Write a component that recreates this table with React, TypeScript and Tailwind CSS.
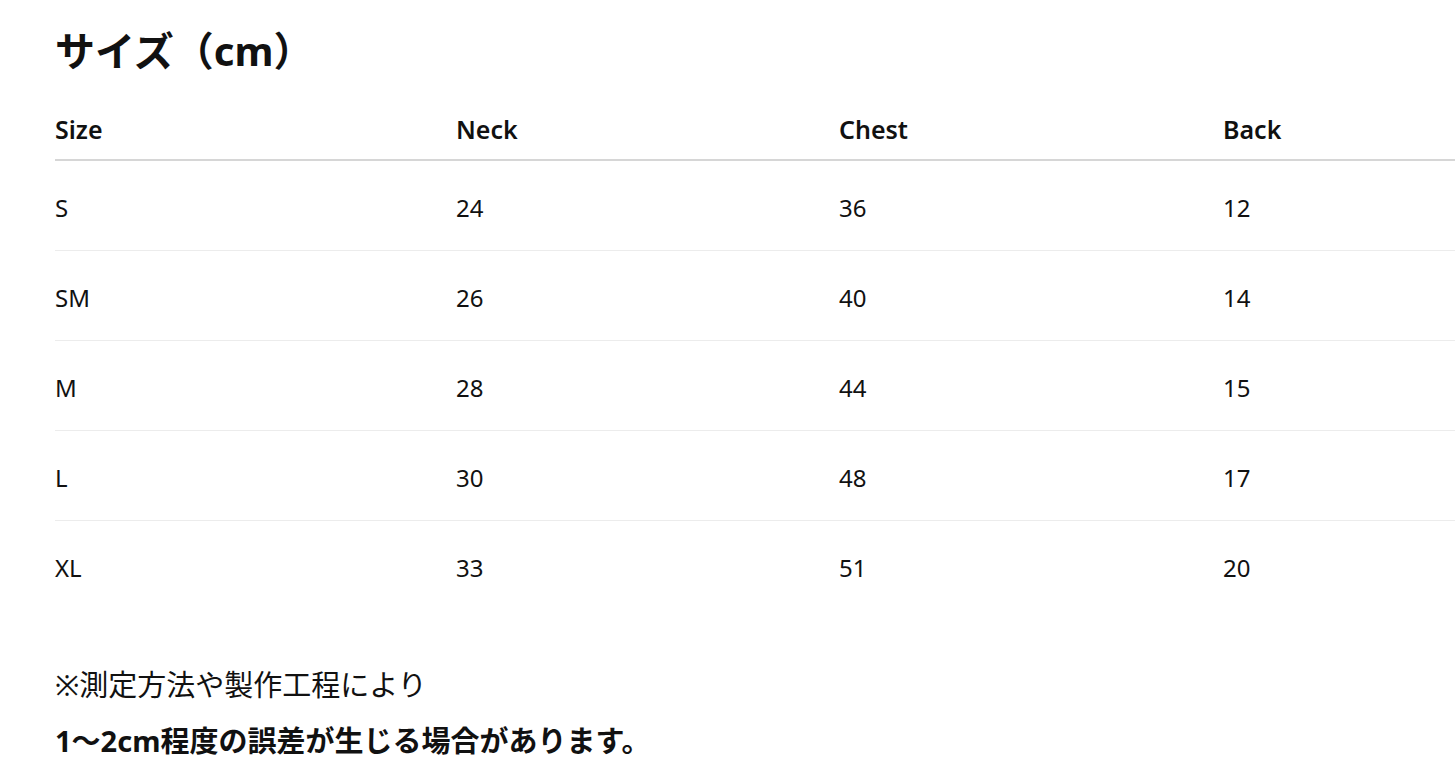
const rows = [
  { size: "S", neck: 24, chest: 36, back: 12 },
  { size: "SM", neck: 26, chest: 40, back: 14 },
  { size: "M", neck: 28, chest: 44, back: 15 },
  { size: "L", neck: 30, chest: 48, back: 17 },
  { size: "XL", neck: 33, chest: 51, back: 20 },
];

const cols = "grid grid-cols-[401px_383px_384px_1fr]";

export default function App() {
  return (
    <div
      className="min-h-screen bg-white pl-[55px] pt-[21px] text-[#111]"
      style={{ fontFamily: '"Noto Sans", "Noto Sans CJK JP", sans-serif' }}
    >
      <h1 className="text-[40px] font-bold leading-[60px]">サイズ（cm）</h1>

      <div className="mt-[20px]">
        <div className={`${cols} h-[60px] items-center border-b-2 border-[#d6d6d6] text-[25px] font-semibold`}>
          <div>Size</div>
          <div>Neck</div>
          <div>Chest</div>
          <div>Back</div>
        </div>
        {rows.map((r, i) => (
          <div
            key={r.size}
            className={`${cols} h-[90px] items-center pt-[4px] text-[24px] ${
              i < rows.length - 1 ? "border-b border-[#ececec]" : ""
            }`}
          >
            <div>{r.size}</div>
            <div>{r.neck}</div>
            <div>{r.chest}</div>
            <div>{r.back}</div>
          </div>
        ))}
      </div>

      <div className="mt-[46px] text-[29px] leading-[56px]">
        <p>※測定方法や製作工程により</p>
        <p className="font-bold">1〜2cm程度の誤差が生じる場合があります。</p>
      </div>
    </div>
  );
}
